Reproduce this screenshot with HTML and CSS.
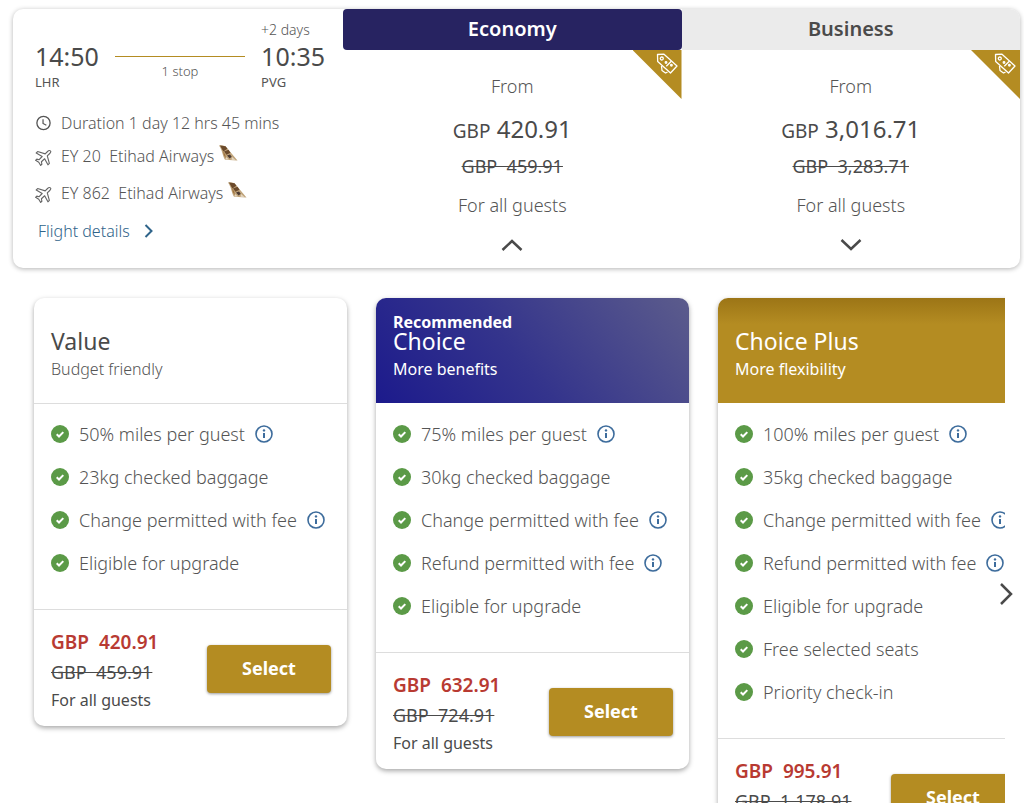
FILE: index.html
```html
<!DOCTYPE html>
<html lang="en">

<head>
    <meta charset="UTF-8">
    <meta name="viewport" content="width=device-width, initial-scale=1.0">
    <title>Select your flight</title>
    <link rel="stylesheet" href="styles.css">
</head>

<body>
    <!-- Shared icons -->
    <svg class="sprite" aria-hidden="true">
        <symbol id="i-check" viewBox="0 0 18 18">
            <circle cx="9" cy="9" r="9" fill="#5b9a47" />
            <path d="M5.7 9.3l2.3 2.2 4.3-4.4" fill="none" stroke="#fff" stroke-width="2" />
        </symbol>
        <symbol id="i-info" viewBox="0 0 18 18">
            <circle cx="9" cy="9" r="8" fill="none" stroke="#3d6c9c" stroke-width="1.6" />
            <path d="M9 8v5" stroke="#3d6c9c" stroke-width="2" />
            <circle cx="9" cy="5.4" r="1.2" fill="#3d6c9c" />
        </symbol>
        <symbol id="i-plane" viewBox="0 0 18 18">
            <path d="M16.400 1.500c-.8-.7-2.300-.2-3.100.6L10.800 4.600 2.800 2.200 1.300 3.700l6.300 3.700-3.200 3.400-2.500-.6-1.300 1.300 3.400 2 2 3.400 1.300-1.300-.5-2.600 3.400-3.200 3.500 6.400 1.500-1.500-2.200-8 2.600-2.500c.8-.8 1.500-2.200.8-2.700z" fill="none" stroke="#666" stroke-width="1.200" stroke-linejoin="round" />
        </symbol>
        <symbol id="i-tail" viewBox="0 0 19 16">
            <path d="M0 0.500C2 0 4 0.300 6.500 1.300L18.500 15.500 6 14.800C3.500 10.500 3.200 5 0 0.500z" fill="#c0a57c" />
            <path d="M1 0.500l5.500.8 2 2.500-4.200 2.700zM5 6.500l4.500-1.700 2 3-4 2z" fill="#6b4a2b" />
            <path d="M3.800 6l2.500 3.500.5 4-2-3.500z" fill="#a0743f" />
            <path d="M8 10.500l3-1 1.700 2.300-2 1.800z" fill="#4b3a32" />
            <path d="M7 12l3 2.500-3.500.1zM13 12l3.500 3-4-.2z" fill="#e5d6c0" />
        </symbol>
        <symbol id="i-tag" viewBox="0 0 24 24">
            <g fill="none" stroke="#fff" stroke-width="1.300" stroke-linejoin="round">
                <path d="M2.500 2.500l6.500-.3L22 14 15.500 21 2.700 9.500z" />
                <circle cx="6.800" cy="6.500" r="1.500" />
                <path d="M11.300 14.300l5-5" />
                <circle cx="11" cy="10.500" r=".8" />
                <circle cx="16.400" cy="13.300" r=".8" />
                <path d="M6.500 14l.5 4.500 3.500 2.500 2-.8" />
            </g>
        </symbol>
    </svg>

    <main>
        <!-- Flight summary -->
        <section class="flight">
            <div class="flight-info">
                <div class="route">
                    <div class="stop">
                        <time class="stop-time">14:50</time>
                        <span>LHR</span>
                    </div>
                    <div class="stops">1 stop</div>
                    <div class="stop">
                        <span class="days">+2 days</span>
                        <time class="stop-time">10:35</time>
                        <span>PVG</span>
                    </div>
                </div>
                <ul class="legs">
                    <li class="duration">
                        <svg class="leg-icon" viewBox="0 0 18 18">
                            <circle cx="9" cy="9" r="7" fill="none" stroke="#555" stroke-width="1.400" />
                            <path d="M8.500 5v4.500l3.500 1.800" fill="none" stroke="#555" stroke-width="1.300" />
                        </svg>
                        Duration 1 day 12 hrs 45 mins
                    </li>
                    <li>
                        <svg class="leg-icon leg-plane"><use href="#i-plane" /></svg>
                        EY 20&nbsp; Etihad Airways
                        <svg class="tail"><use href="#i-tail" /></svg>
                    </li>
                    <li>
                        <svg class="leg-icon leg-plane"><use href="#i-plane" /></svg>
                        EY 862&nbsp; Etihad Airways
                        <svg class="tail"><use href="#i-tail" /></svg>
                    </li>
                </ul>
                <a class="details" href="#">Flight details
                    <svg viewBox="0 0 10 14"><path d="M1.500 1l6 6-6 6" /></svg>
                </a>
            </div>

            <div class="cabin cabin-active">
                <button class="cabin-tab">Economy</button>
                <div class="cabin-body">
                    <span class="deal"><svg><use href="#i-tag" /></svg></span>
                    <p>From</p>
                    <p class="cabin-price"><small>GBP</small> 420.91</p>
                    <p class="cabin-old"><s>GBP&nbsp; 459.91</s></p>
                    <p class="cabin-guests">For all guests</p>
                    <button class="toggle" aria-label="Hide economy fares">
                        <svg viewBox="0 0 22 12"><path d="M1.500 11l9.500-9 9.500 9" /></svg>
                    </button>
                </div>
            </div>

            <div class="cabin">
                <button class="cabin-tab">Business</button>
                <div class="cabin-body">
                    <span class="deal"><svg><use href="#i-tag" /></svg></span>
                    <p>From</p>
                    <p class="cabin-price"><small>GBP</small> 3,016.71</p>
                    <p class="cabin-old"><s>GBP&nbsp; 3,283.71</s></p>
                    <p class="cabin-guests">For all guests</p>
                    <button class="toggle" aria-label="Show business fares">
                        <svg viewBox="0 0 22 12"><path d="M1.500 1l9.500 9 9.500-9" /></svg>
                    </button>
                </div>
            </div>
        </section>

        <!-- Fare cards -->
        <section class="fares">
            <div class="fares-track">
                <article class="fare">
                    <header class="fare-head">
                        <h2>Value</h2>
                        <p>Budget friendly</p>
                    </header>
                    <ul class="features">
                        <li><svg><use href="#i-check" /></svg>50% miles per guest <button class="info" aria-label="About miles"><svg><use href="#i-info" /></svg></button></li>
                        <li><svg><use href="#i-check" /></svg>23kg checked baggage</li>
                        <li><svg><use href="#i-check" /></svg>Change permitted with fee <button class="info" aria-label="About changes"><svg><use href="#i-info" /></svg></button></li>
                        <li><svg><use href="#i-check" /></svg>Eligible for upgrade</li>
                    </ul>
                    <footer class="fare-foot">
                        <div>
                            <p class="price">GBP&nbsp; 420.91</p>
                            <p class="old"><s>GBP&nbsp; 459.91</s></p>
                            <p class="guests">For all guests</p>
                        </div>
                        <button class="select">Select</button>
                    </footer>
                </article>

                <article class="fare">
                    <header class="fare-head fare-choice">
                        <strong>Recommended</strong>
                        <h2>Choice</h2>
                        <p>More benefits</p>
                    </header>
                    <ul class="features">
                        <li><svg><use href="#i-check" /></svg>75% miles per guest <button class="info" aria-label="About miles"><svg><use href="#i-info" /></svg></button></li>
                        <li><svg><use href="#i-check" /></svg>30kg checked baggage</li>
                        <li><svg><use href="#i-check" /></svg>Change permitted with fee <button class="info" aria-label="About changes"><svg><use href="#i-info" /></svg></button></li>
                        <li><svg><use href="#i-check" /></svg>Refund permitted with fee <button class="info" aria-label="About refunds"><svg><use href="#i-info" /></svg></button></li>
                        <li><svg><use href="#i-check" /></svg>Eligible for upgrade</li>
                    </ul>
                    <footer class="fare-foot">
                        <div>
                            <p class="price">GBP&nbsp; 632.91</p>
                            <p class="old"><s>GBP&nbsp; 724.91</s></p>
                            <p class="guests">For all guests</p>
                        </div>
                        <button class="select">Select</button>
                    </footer>
                </article>

                <article class="fare">
                    <header class="fare-head fare-plus">
                        <h2>Choice Plus</h2>
                        <p>More flexibility</p>
                    </header>
                    <ul class="features">
                        <li><svg><use href="#i-check" /></svg>100% miles per guest <button class="info" aria-label="About miles"><svg><use href="#i-info" /></svg></button></li>
                        <li><svg><use href="#i-check" /></svg>35kg checked baggage</li>
                        <li><svg><use href="#i-check" /></svg>Change permitted with fee <button class="info" aria-label="About changes"><svg><use href="#i-info" /></svg></button></li>
                        <li><svg><use href="#i-check" /></svg>Refund permitted with fee <button class="info" aria-label="About refunds"><svg><use href="#i-info" /></svg></button></li>
                        <li><svg><use href="#i-check" /></svg>Eligible for upgrade</li>
                        <li><svg><use href="#i-check" /></svg>Free selected seats</li>
                        <li><svg><use href="#i-check" /></svg>Priority check-in</li>
                    </ul>
                    <footer class="fare-foot">
                        <div>
                            <p class="price">GBP&nbsp; 995.91</p>
                            <p class="old"><s>GBP&nbsp; 1,178.91</s></p>
                            <p class="guests">For all guests</p>
                        </div>
                        <button class="select">Select</button>
                    </footer>
                </article>
            </div>
            <button class="next" aria-label="Next fares">
                <svg viewBox="0 0 14 24"><path d="M2 2l10 10L2 22" /></svg>
            </button>
        </section>
    </main>
</body>

</html>
```
FILE: styles.css
```css
:root {
    --color-navy: #272361;
    --color-gold: #b48c22;
    --color-text: #4a4a4a;
    --color-light-text: #555555;
    --color-link: #2f648a;
    --color-red: #b83a32;
    --color-line: #dddddd;
}

* {
    box-sizing: border-box;
    margin: 0;
    padding: 0;
}

body {
    background-color: #fff;
    color: var(--color-text);
    font-family: "Noto Sans", sans-serif;
    font-size: 16px;
    height: 100vh;
    overflow: hidden;
}

main {
    padding: 9px 4px 0 13px;
}

ul {
    list-style: none;
}

button {
    background: none;
    border: 0;
    color: inherit;
    cursor: pointer;
    font-family: inherit;
}

svg {
    display: block;
    flex: none;
}

.sprite {
    display: none;
}

/* Flight summary */
.flight {
    border-radius: 10px;
    box-shadow: 0 1px 5px rgba(0, 0, 0, 0.3);
    display: grid;
    grid-template-columns: 330px 1fr 1fr;
    overflow: hidden;
}

.flight-info {
    padding: 11px 18px 17px 22px;
}

.route {
    align-items: flex-end;
    display: flex;
    gap: 16px;
    margin-bottom: 16px;
}

.stop {
    color: var(--color-light-text);
    display: flex;
    flex-direction: column;
    font-size: 13px;
    line-height: 20px;
}

.stop-time {
    color: var(--color-text);
    font-size: 25px;
    line-height: 32px;
}

.days {
    font-size: 14px;
    font-weight: 300;
}

.stops {
    border-top: 1px solid var(--color-gold);
    color: var(--color-light-text);
    flex: 1;
    font-size: 13px;
    font-weight: 300;
    height: 36px;
    line-height: 28px;
    text-align: center;
}

.legs li {
    align-items: center;
    color: var(--color-light-text);
    display: flex;
    font-weight: 300;
    height: 37px;
    white-space: nowrap;
}

.legs .duration {
    height: 29px;
}

.leg-icon {
    height: 18px;
    margin-right: 9px;
    width: 17px;
}

.leg-plane {
    margin-top: 4px;
}

.tail {
    height: 16px;
    margin: 0 0 6px 5px;
    width: 19px;
}

.details {
    align-items: center;
    color: var(--color-link);
    display: inline-flex;
    font-weight: 300;
    gap: 14px;
    height: 40px;
    padding-left: 3px;
    text-decoration: none;
}

.details svg {
    fill: none;
    height: 14px;
    stroke: var(--color-link);
    stroke-width: 2;
    width: 10px;
}

.cabin-tab {
    background-color: #ebebeb;
    display: block;
    font-size: 20px;
    font-weight: 600;
    height: 41px;
    padding-bottom: 2px;
    width: 100%;
}

.cabin-active .cabin-tab {
    background-color: var(--color-navy);
    border-radius: 4px;
    color: #fff;
}

.cabin-body {
    align-items: center;
    color: var(--color-light-text);
    display: flex;
    flex-direction: column;
    font-size: 18px;
    font-weight: 300;
    line-height: 24px;
    padding-top: 24px;
    position: relative;
}

.deal {
    background-color: var(--color-gold);
    clip-path: polygon(0 0, 100% 0, 100% 100%);
    height: 49px;
    position: absolute;
    right: 0;
    top: 0;
    width: 49px;
}

.deal svg {
    height: 24px;
    margin: 2px 3px 0 auto;
    width: 24px;
}

.cabin-price {
    color: var(--color-text);
    font-size: 24px;
    font-weight: 400;
    line-height: 32px;
    margin-top: 15px;
}

.cabin-price small {
    font-size: 19px;
}

.cabin-old {
    color: var(--color-text);
    font-weight: 400;
    margin-top: 7px;
}

.cabin-guests {
    margin-top: 15px;
}

.toggle {
    margin-top: 18px;
    padding: 4px;
}

.toggle svg {
    fill: none;
    height: 12px;
    stroke: var(--color-text);
    stroke-width: 2.5;
    width: 22px;
}

/* Fare cards */
.fares {
    margin-top: 30px;
    padding-bottom: 34px;
    position: relative;
}

.fares-track {
    align-items: flex-start;
    display: flex;
    gap: 29px;
    margin-right: 15px;
    overflow-x: clip;
    padding-left: 21px;
}

.fare {
    border-radius: 10px;
    box-shadow: 0 2px 5px rgba(0, 0, 0, 0.35);
    flex: none;
    width: 313px;
}

.fare-head {
    border-bottom: 1px solid var(--color-line);
    border-radius: 10px 10px 0 0;
    display: flex;
    flex-direction: column;
    height: 106px;
    justify-content: flex-end;
    padding: 0 17px 23px;
}

.fare-head strong {
    line-height: 18px;
}

.fare-head h2 {
    font-size: 23px;
    font-weight: 400;
    line-height: 20px;
}

.fare-head p {
    color: var(--color-light-text);
    font-weight: 300;
    line-height: 22px;
    margin-top: 7px;
}

.fare-choice,
.fare-plus {
    border-bottom: 0;
    color: #fff;
    height: 105px;
}

.fare-choice {
    background: linear-gradient(50deg, #1c1a8c, #34348c 45%, #5c5c8c);
}

.fare-plus {
    background: linear-gradient(#9c7516, var(--color-gold) 25%);
}

.fare-choice p,
.fare-plus p {
    color: #fff;
    font-weight: 400;
}

.features {
    border-bottom: 1px solid var(--color-line);
    padding: 8px 0 25px 17px;
}

.fare-choice + .features,
.fare-plus + .features {
    padding-top: 9px;
}

.features li {
    align-items: center;
    color: var(--color-light-text);
    display: flex;
    font-size: 18px;
    font-weight: 300;
    height: 43px;
    white-space: nowrap;
}

.features svg {
    height: 18px;
    margin-right: 10px;
    width: 18px;
}

.info {
    margin-left: 10px;
}

.info svg {
    margin: 0;
}

.fare-foot {
    align-items: center;
    display: flex;
    justify-content: space-between;
    padding: 17px 16px 13px 17px;
    white-space: nowrap;
}

.price {
    color: var(--color-red);
    font-size: 19px;
    font-weight: 600;
    line-height: 30px;
}

.old {
    font-size: 18px;
    line-height: 30px;
}

.guests {
    line-height: 26px;
}

.select {
    background-color: var(--color-gold);
    border-radius: 4px;
    box-shadow: 0 1px 3px rgba(0, 0, 0, 0.4);
    color: #fff;
    font-size: 18px;
    font-weight: 700;
    height: 48px;
    margin-bottom: 2px;
    padding-bottom: 2px;
    width: 124px;
}

.next {
    position: absolute;
    right: 7px;
    top: 50%;
    transform: translateY(-50%);
}

.next svg {
    fill: none;
    height: 24px;
    stroke: var(--color-text);
    stroke-width: 2.5;
    width: 14px;
}
```
